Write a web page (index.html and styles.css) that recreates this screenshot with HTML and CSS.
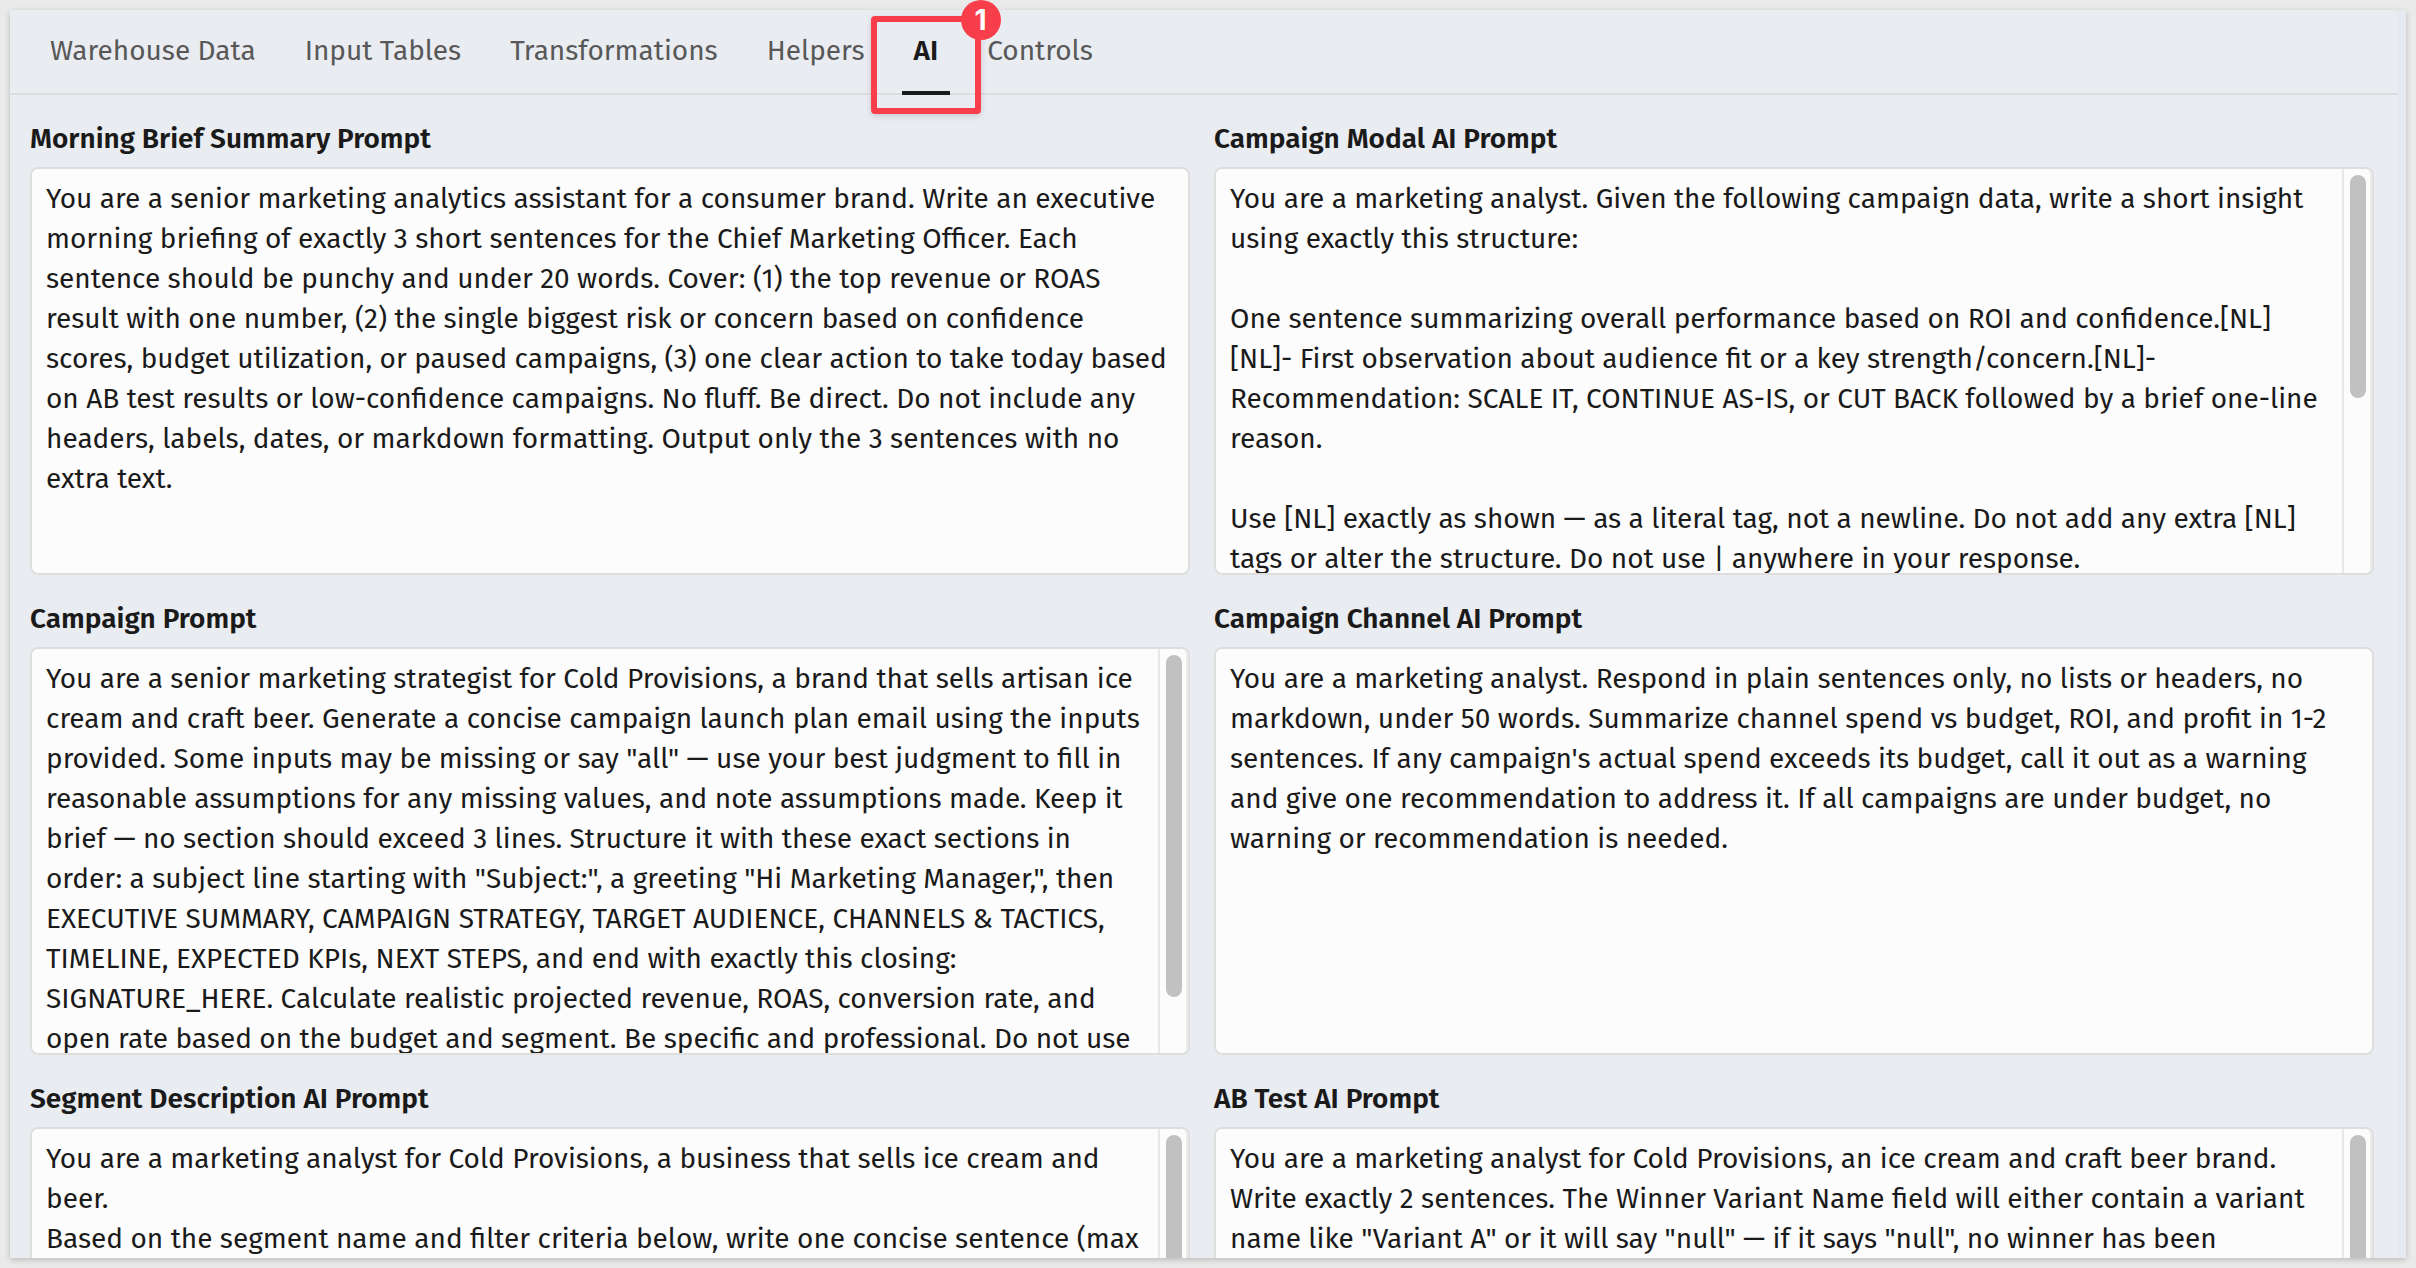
FILE: index.html
```
<!DOCTYPE html>
<html lang="en">
<head>
    <meta charset="UTF-8">
    <meta name="viewport" content="width=device-width, initial-scale=1.0">
    <title>AI Prompts</title>
    <link rel="stylesheet" href="styles.css">
</head>
<body>
    <div class="window">
        <div class="panel">
            <nav class="tabs">
                <a class="tab" href="#warehouse">Warehouse Data</a>
                <a class="tab" href="#input">Input Tables</a>
                <a class="tab" href="#transformations">Transformations</a>
                <a class="tab" href="#helpers">Helpers</a>
                <a class="tab active" href="#ai" aria-current="page">AI<span class="callout"><span class="callout-number">1</span></span></a>
                <a class="tab" href="#controls">Controls</a>
            </nav>

            <div class="prompts">
                <div class="field">
                    <label for="morning-brief">Morning Brief Summary Prompt</label>
                    <div class="input-wrap">
                        <textarea id="morning-brief" wrap="off">You are a senior marketing analytics assistant for a consumer brand. Write an executive
morning briefing of exactly 3 short sentences for the Chief Marketing Officer. Each
sentence should be punchy and under 20 words. Cover: (1) the top revenue or ROAS
result with one number, (2) the single biggest risk or concern based on confidence
scores, budget utilization, or paused campaigns, (3) one clear action to take today based
on AB test results or low-confidence campaigns. No fluff. Be direct. Do not include any
headers, labels, dates, or markdown formatting. Output only the 3 sentences with no
extra text.</textarea>
                    </div>
                </div>

                <div class="field">
                    <label for="campaign-modal">Campaign Modal AI Prompt</label>
                    <div class="input-wrap">
                        <textarea id="campaign-modal" wrap="off">You are a marketing analyst. Given the following campaign data, write a short insight
using exactly this structure:

One sentence summarizing overall performance based on ROI and confidence.[NL]
[NL]- First observation about audience fit or a key strength/concern.[NL]-
Recommendation: SCALE IT, CONTINUE AS-IS, or CUT BACK followed by a brief one-line
reason.

Use [NL] exactly as shown — as a literal tag, not a newline. Do not add any extra [NL]
tags or alter the structure. Do not use | anywhere in your response.</textarea>
                        <div class="scrollbar"><div class="thumb" style="height: 56%"></div></div>
                    </div>
                </div>

                <div class="field">
                    <label for="campaign">Campaign Prompt</label>
                    <div class="input-wrap">
                        <textarea id="campaign" wrap="off">You are a senior marketing strategist for Cold Provisions, a brand that sells artisan ice
cream and craft beer. Generate a concise campaign launch plan email using the inputs
provided. Some inputs may be missing or say "all" — use your best judgment to fill in
reasonable assumptions for any missing values, and note assumptions made. Keep it
brief — no section should exceed 3 lines. Structure it with these exact sections in
order: a subject line starting with "Subject:", a greeting "Hi Marketing Manager,", then
EXECUTIVE SUMMARY, CAMPAIGN STRATEGY, TARGET AUDIENCE, CHANNELS &amp; TACTICS,
TIMELINE, EXPECTED KPIs, NEXT STEPS, and end with exactly this closing:
SIGNATURE_HERE. Calculate realistic projected revenue, ROAS, conversion rate, and
open rate based on the budget and segment. Be specific and professional. Do not use</textarea>
                        <div class="scrollbar"><div class="thumb" style="height: 86%"></div></div>
                    </div>
                </div>

                <div class="field">
                    <label for="campaign-channel">Campaign Channel AI Prompt</label>
                    <div class="input-wrap">
                        <textarea id="campaign-channel" wrap="off">You are a marketing analyst. Respond in plain sentences only, no lists or headers, no
markdown, under 50 words. Summarize channel spend vs budget, ROI, and profit in 1-2
sentences. If any campaign's actual spend exceeds its budget, call it out as a warning
and give one recommendation to address it. If all campaigns are under budget, no
warning or recommendation is needed.</textarea>
                    </div>
                </div>

                <div class="field">
                    <label for="segment">Segment Description AI Prompt</label>
                    <div class="input-wrap">
                        <textarea id="segment" wrap="off">You are a marketing analyst for Cold Provisions, a business that sells ice cream and
beer.
Based on the segment name and filter criteria below, write one concise sentence (max</textarea>
                        <div class="scrollbar"><div class="thumb" style="height: 80%"></div></div>
                    </div>
                </div>

                <div class="field">
                    <label for="ab-test">AB Test AI Prompt</label>
                    <div class="input-wrap">
                        <textarea id="ab-test" wrap="off">You are a marketing analyst for Cold Provisions, an ice cream and craft beer brand.
Write exactly 2 sentences. The Winner Variant Name field will either contain a variant
name like "Variant A" or it will say "null" — if it says "null", no winner has been</textarea>
                        <div class="scrollbar"><div class="thumb" style="height: 80%"></div></div>
                    </div>
                </div>
            </div>
        </div>
    </div>
</body>
</html>
```
FILE: styles.css
```
* { margin: 0; padding: 0; box-sizing: border-box; }
body {
    height: 100vh;
    padding: 10px;
    background: #eaeaea;
    font-family: 'Fira Sans', 'Noto Sans', sans-serif;
    font-size: 28px;
    line-height: 40px;
    color: #1a1a1a;
}
.window {
    height: 100%;
    padding-right: 8px;
    background: #e5e9f0;
    box-shadow: 0 2px 6px rgba(0,0,0,0.2);
}
.panel {
    height: 100%;
    display: flex;
    flex-direction: column;
    background: #e9ecf1;
    border-top-right-radius: 6px;
}
.tabs {
    display: flex;
    flex: none;
    gap: 25px;
    padding: 0 28px;
    border-bottom: 2px solid #dedede;
}
.tab {
    position: relative;
    min-width: 48px;
    padding: 21px 12px 20px;
    margin-bottom: -2px;
    border-bottom: 4px solid transparent;
    color: #585858;
    text-align: center;
    text-decoration: none;
}
.tab.active {
    border-bottom-color: #1a1a1a;
    color: #1a1a1a;
    font-weight: 600;
}
/* the badge sticks out above the window, so only .prompts clips its overflow */
.callout {
    position: absolute;
    top: 6px;
    left: -31px;
    width: 110px;
    height: 98px;
    border: 6px solid #f93e4b;
    border-radius: 4px;
    box-shadow: 0 2px 6px rgba(0,0,0,0.15);
    z-index: 1;
}
.callout-number {
    position: absolute;
    top: -22px;
    right: -26px;
    width: 40px;
    height: 40px;
    border-radius: 50%;
    background: #f93e4b;
    color: white;
    font-family: Inter, sans-serif;
    font-weight: 700;
}
.prompts {
    flex: 1;
    min-height: 0;
    overflow: hidden;
    display: grid;
    grid-template-columns: 1fr 1fr;
    grid-auto-rows: max-content;
    gap: 24px;
    padding: 24px 24px 0 20px;
}
.field label {
    display: block;
    margin-bottom: 8px;
    font-weight: 600;
}
.input-wrap {
    position: relative;
    height: 408px;
}
.input-wrap textarea {
    display: block;
    width: 100%;
    height: 100%;
    padding: 10px 14px 0;
    border: 2px solid #dedede;
    border-radius: 8px;
    background: #fcfcfc;
    color: #1a1a1a;
    font: inherit;
    overflow: hidden;
    resize: none;
    outline: none;
}
.scrollbar {
    position: absolute;
    top: 2px;
    right: 2px;
    bottom: 2px;
    width: 30px;
    padding: 6px 4px 0 6px;
    border-left: 2px solid #e8e8e8;
    border-right: 2px solid #ededed;
    border-radius: 0 6px 6px 0;
}
.thumb {
    width: 16px;
    border-radius: 8px;
    background: #c1c1c1;
}
```
